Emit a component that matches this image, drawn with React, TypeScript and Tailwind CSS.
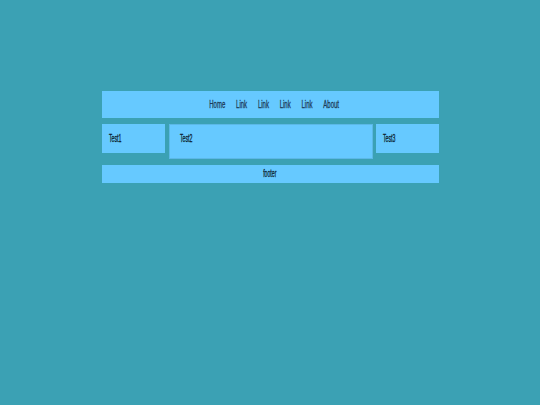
export default function App() {
  const links = ['Home', 'Link', 'Link', 'Link', 'Link', 'About'];

  return (
    <main className="min-h-[405px] w-full bg-[#3ba1b4] pt-[91px] font-['Liberation_Sans',Arial,sans-serif] text-[10px] [-webkit-text-stroke:0.3px]">
      <div className="mx-auto flex w-[337px] flex-col gap-[6px]">
        {/* Header nav */}
        <header className="flex h-[27px] items-center justify-center bg-[#66c9ff] pl-[9px]">
          <ul className="flex origin-center scale-x-[0.6] gap-[18px] text-[#1d3b57]">
            {links.map((label, i) => (
              <li key={i}>{label}</li>
            ))}
          </ul>
        </header>

        {/* Columns */}
        <div className="flex items-start text-[#0b1f2e]">
          <div className="h-[29px] w-[63px] bg-[#66c9ff] px-[7px] pt-[7px]">
            <span className="inline-block origin-left scale-x-[0.52]">Test1</span>
          </div>
          <div className="ml-[4px] h-[35px] w-[204px] border border-[#5bb8e6] bg-[#66c9ff] px-[10px] pt-[6px]">
            <span className="inline-block origin-left scale-x-[0.52]">Test2</span>
          </div>
          <div className="ml-[3px] h-[29px] w-[63px] bg-[#66c9ff] px-[7px] pt-[7px]">
            <span className="inline-block origin-left scale-x-[0.52]">Test3</span>
          </div>
        </div>

        {/* Footer */}
        <footer className="flex h-[18px] items-center justify-center bg-[#66c9ff] pb-[1px] text-[#0b1f2e]">
          <span className="inline-block origin-center scale-x-[0.52]">footer</span>
        </footer>
      </div>
    </main>
  );
}
